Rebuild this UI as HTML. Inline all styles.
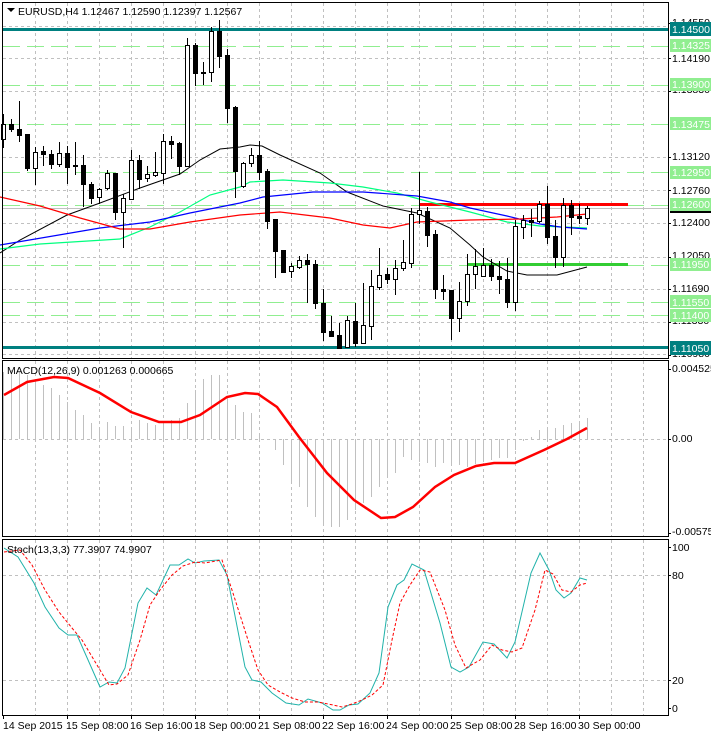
<!DOCTYPE html>
<html><head><meta charset="utf-8"><style>
html,body{margin:0;padding:0;background:#fff;width:711px;height:733px;overflow:hidden}
svg{display:block;font-family:"Liberation Sans",sans-serif;font-size:10.5px}
</style></head><body>
<svg id="s" width="711" height="733" viewBox="0 0 711 733" xmlns="http://www.w3.org/2000/svg">
<rect width="711" height="733" fill="#fff"/>
<g id="grid" stroke="#c0c0c0" stroke-dasharray="3,3" stroke-width="1" shape-rendering="crispEdges"></g>
<g id="levels" shape-rendering="crispEdges"></g>
<g id="mas" fill="none" stroke-width="1.2">
<polyline stroke="#000" stroke-width="1" points="0,253 20,240 67,215 100,203 140,188 180,174 200,160 220,149 240,147 250,145 262,146 280,155 320,173 347,192 383,206 417,213 450,228 470,245 483,257 507,271 527,275 557,275 587,267"/>
<polyline stroke="#00ff7f" points="0,249 40,244 120,239 150,227 180,212 210,195 240,187 250,182 283,180 330,183 363,187 397,193 430,202 470,212 507,222 540,226 587,228"/>
<polyline stroke="#0000ff" points="0,245 100,228 150,222 190,213 240,203 263,197 313,192 363,192 417,196 450,202 470,208 507,216 540,224 560,227 587,229"/>
<polyline stroke="#ff0000" points="0,197 40,206 80,218 120,229 150,229 190,222 240,215 280,212 330,218 363,225 390,228 417,222 470,220 520,219 557,217 587,214"/>
</g>
<g id="candles" shape-rendering="crispEdges"></g>
<g id="hist" stroke="#c0c0c0" stroke-width="1" shape-rendering="crispEdges"></g>
<polyline fill="none" stroke="#ff0000" stroke-width="2.5" points="4,395 27,382 54,377 68,378 100,393 131,412 159,422 181,422 200,415 227,397 245,393 258,394 277,407 299,437 327,473 354,500 381,518 395,517 413,507 435,487 454,475 476,466 494,463 515,463 544,450 567,439 587,428"/>
<polyline id="st" fill="none" stroke="#20b2aa" stroke-width="1" points="4,548 18,557 34,583 45,607 59,628 68,635 77,635 100,687 109,682 117,683 125,668 138,603 147,588 156,595 170,565 179,565 188,559 195,563 204,561 219,560 227,575 245,667 252,680 261,682 272,693 286,703 299,705 308,699 322,703 333,710 340,710 349,705 358,704 370,693 379,673 388,607 397,585 404,580 412,564 424,570 440,623 451,667 460,672 469,667 483,642 494,644 507,658 515,642 531,573 540,553 549,570 556,590 564,598 571,593 580,578 587,580"/>
<polyline fill="none" stroke="#ff0000" stroke-width="1" stroke-dasharray="3,2" points="4,552 20,550 32,565 45,590 59,612 72,628 82,640 100,670 109,685 117,684 128,675 140,640 150,605 160,590 172,575 183,566 195,562 205,563 222,560 232,590 248,640 258,670 268,685 280,692 292,698 305,702 318,702 333,705 342,707 352,704 362,700 372,695 383,685 392,640 400,603 410,585 420,570 430,572 445,610 455,645 466,668 480,660 492,645 502,650 512,652 522,648 535,610 545,570 553,574 562,590 571,592 580,585 587,583"/>
<g id="frames" fill="none" stroke="#000" stroke-width="1" shape-rendering="crispEdges">
<rect x="2.5" y="2.5" width="666" height="356"/>
<rect x="2.5" y="360.5" width="666" height="176"/>
<rect x="2.5" y="539.5" width="666" height="176"/>
</g>
<g id="axis" shape-rendering="crispEdges"></g>
<g fill="#000">
<path d="M7 8 L15 8 L11 12 Z"/>
<text x="18" y="15">EURUSD,H4  1.12467 1.12590 1.12397 1.12567</text>
<text x="7" y="374">MACD(12,26,9) 0.001263 0.000665</text>
<text x="7" y="553">Stoch(13,3,3) 77.3907 74.9907</text>
<text x="672" y="372">0.004525</text>
<text x="672" y="442">0.00</text>
<text x="672" y="535">-0.005758</text>
<text x="672" y="551">100</text>
<text x="672" y="579">80</text>
<text x="672" y="684">20</text>
<text x="672" y="712">0</text>
<text x="3" y="729">14 Sep 2015</text>
<text x="66" y="729">15 Sep 08:00</text>
<text x="130" y="729">16 Sep 16:00</text>
<text x="194" y="729">18 Sep 00:00</text>
<text x="258" y="729">21 Sep 08:00</text>
<text x="322" y="729">22 Sep 16:00</text>
<text x="386" y="729">24 Sep 00:00</text>
<text x="450" y="729">25 Sep 08:00</text>
<text x="514" y="729">28 Sep 16:00</text>
<text x="578" y="729">30 Sep 00:00</text>
<text x="672" y="62">1.14190</text>
<text x="672" y="160">1.13120</text>
<text x="672" y="194">1.12760</text>
<text x="672" y="226">1.12400</text>
<text x="672" y="259">1.12050</text>
<text x="672" y="292">1.11690</text>
<text x="672" y="26">1.14550</text>
<text x="672" y="93">1.13830</text>
<text x="672" y="324">1.11330</text>
<text x="672" y="357">1.10980</text>
</g>
<g id="labels" font-size="10.5">
<rect x="670" y="22" width="41" height="14" fill="#008080"/><text x="672" y="33" fill="#fff">1.14500</text>
<rect x="670" y="39" width="41" height="13" fill="#90ee90"/><text x="672" y="49" fill="#fff">1.14325</text>
<rect x="670" y="78" width="41" height="13" fill="#90ee90"/><text x="672" y="88" fill="#fff">1.13900</text>
<rect x="670" y="117" width="41" height="13" fill="#90ee90"/><text x="672" y="128" fill="#fff">1.13475</text>
<rect x="670" y="166" width="41" height="13" fill="#90ee90"/><text x="672" y="176" fill="#fff">1.12950</text>
<rect x="670" y="209" width="41" height="4" fill="#000"/>
<rect x="670" y="198" width="41" height="13" fill="#90ee90"/><text x="672" y="208" fill="#fff">1.12600</text>
<rect x="670" y="258" width="41" height="13" fill="#90ee90"/><text x="672" y="268" fill="#fff">1.11950</text>
<rect x="670" y="295" width="41" height="13" fill="#90ee90"/><text x="672" y="306" fill="#fff">1.11550</text>
<rect x="670" y="309" width="41" height="13" fill="#90ee90"/><text x="672" y="319" fill="#fff">1.11400</text>
<rect x="670" y="341" width="41" height="14" fill="#008080"/><text x="672" y="352" fill="#fff">1.11050</text>
</g>
</svg>
<script>
var NS="http://www.w3.org/2000/svg";
function el(p,t,a){var e=document.createElementNS(NS,t);for(var k in a)e.setAttribute(k,a[k]);p.appendChild(e);return e;}
var g=document.getElementById('grid');
for(var x=35.5;x<668;x+=32){el(g,'line',{x1:x,y1:3,x2:x,y2:358});el(g,'line',{x1:x,y1:361,x2:x,y2:536});el(g,'line',{x1:x,y1:540,x2:x,y2:715});}
[26,58,91,157,190,223,257,289,322,354].forEach(function(y){el(g,'line',{x1:3,y1:y+.5,x2:668,y2:y+.5});});
[439,575,680].forEach(function(y){el(g,'line',{x1:3,y1:y+.5,x2:668,y2:y+.5});});
var L=document.getElementById('levels');
[46,85,124,172,205,265,302,315].forEach(function(y){el(L,'line',{x1:3,y1:y+.5,x2:668,y2:y+.5,stroke:'#90ee90','stroke-width':1,'stroke-dasharray':'17,7'});});
el(L,'line',{x1:3,y1:208.5,x2:668,y2:208.5,stroke:'#c0c0c0','stroke-width':1});
el(L,'rect',{x:3,y:28,width:666,height:3,fill:'#008080'});
el(L,'rect',{x:3,y:346,width:666,height:3,fill:'#008080'});
el(L,'rect',{x:420,y:203,width:208,height:3,fill:'#ff0000'});
el(L,'rect',{x:467,y:263,width:161,height:3,fill:'#32cd32'});
var C=[[3,114,124,139,148,1],[11,119,124,129,132,0],[19,101,129,135,142,0],[27,134,134,168,171,0],[35,147,152,168,185,1],[43,146,151,154,166,0],[51,150,154,164,169,0],[59,142,153,164,167,1],[67,146,153,167,184,0],[75,142,165,165,175,0],[83,155,165,184,207,0],[91,182,184,198,204,0],[99,188,189,197,204,1],[107,170,173,188,190,1],[115,173,173,212,220,0],[123,194,198,212,248,1],[131,150,160,199,200,1],[139,155,160,179,189,0],[147,166,174,178,182,1],[155,152,172,175,177,1],[163,134,141,173,184,1],[171,136,141,144,159,0],[179,142,143,166,175,0],[187,38,45,166,166,1],[195,43,45,73,86,0],[203,62,72,73,85,0],[211,27,31,72,82,1],[219,20,31,56,68,0],[227,49,55,108,123,0],[235,106,107,171,198,0],[243,162,163,186,188,1],[251,148,155,163,167,1],[259,141,155,172,180,0],[267,169,171,221,229,0],[275,219,219,251,278,0],[283,250,250,272,272,0],[291,263,266,271,278,1],[299,256,260,267,269,1],[307,254,260,264,303,0],[315,260,264,303,309,0],[323,289,303,332,341,0],[331,316,331,336,337,0],[339,323,335,348,349,0],[347,316,320,347,348,1],[355,303,321,343,347,0],[363,283,325,343,343,1],[371,270,286,326,340,1],[379,248,275,287,290,1],[387,268,274,279,284,0],[395,260,268,279,295,1],[403,240,262,268,271,1],[411,208,214,263,268,1],[419,172,210,214,224,1],[427,207,211,235,247,0],[435,230,234,289,299,0],[443,275,289,291,300,0],[451,290,290,318,340,0],[459,282,301,318,332,1],[467,254,274,301,306,1],[475,249,266,274,289,1],[483,248,265,276,277,1],[491,259,265,276,281,0],[499,261,276,279,294,0],[507,258,279,302,308,0],[515,220,226,302,311,1],[523,215,220,227,239,1],[531,209,220,222,237,0],[539,201,204,221,223,1],[547,186,204,237,244,0],[555,220,236,257,268,0],[563,198,205,257,267,1],[571,200,205,217,235,0],[579,204,216,218,224,0],[587,206,208,218,225,1]];
var cg=document.getElementById('candles');
C.forEach(function(c){var x=c[0];el(cg,'line',{x1:x+.5,y1:c[1],x2:x+.5,y2:c[4],stroke:'#000','stroke-width':1});
var h=Math.max(c[3]-c[2],1);el(cg,'rect',{x:x-1.5,y:c[2]+.5,width:4,height:h,fill:c[5]?'#fff':'#000',stroke:'#000','stroke-width':1});});
var H=[372,370,372,375,380,385,388,395,402,410,415,423,428,422,426,426,427,420,423,425,423,420,418,403,390,379,375,375,398,405,412,413,435,440,450,465,483,487,507,517,525,527,527,520,510,503,497,487,478,473,457,460,462,463,467,463,463,465,467,464,462,460,458,458,450,441,437,430,428,428,425,423,422,418];
var hg=document.getElementById('hist');
C.forEach(function(c,i){el(hg,'line',{x1:c[0]+.5,y1:439,x2:c[0]+.5,y2:H[i]});});
var a=document.getElementById('axis');
[23,58,91,157,190,223,257,289,322,355,369,439,533,547,575,680,708].forEach(function(y){el(a,'line',{x1:668,y1:y+.5,x2:671,y2:y+.5,stroke:'#000'});});
[3,67,131,195,259,323,387,451,515,579].forEach(function(x){el(a,'line',{x1:x+.5,y1:715,x2:x+.5,y2:719,stroke:'#000'});});
</script>
</body></html>
